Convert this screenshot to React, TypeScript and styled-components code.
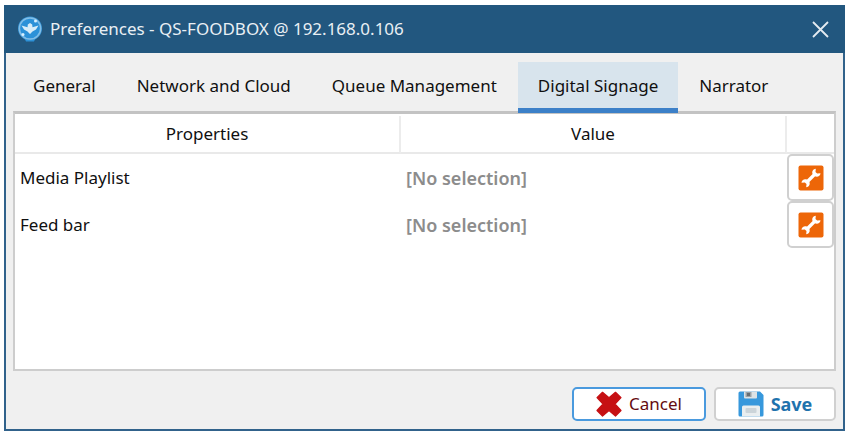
import React, { useState } from "react";
import styled, { createGlobalStyle } from "styled-components";

const Global = createGlobalStyle`
  *, *::before, *::after { box-sizing: border-box; }
  body {
    margin: 0;
    background: #ffffff;
    color: #101010;
    font-family: "Noto Sans", "Open Sans", sans-serif;
    font-size: 17px;
    line-height: 24px;
  }
  button { font: inherit; color: inherit; cursor: pointer; }
`;

const Page = styled.div`
  display: flex;
  min-height: 100vh;
  padding: 5px 6px 4px 4px;
`;

const Window = styled.main`
  display: flex;
  flex: 1;
  flex-direction: column;
  min-width: 0;
  border: 2px solid #31628b;
  border-top: 0;
  background: #f0f0f0;
`;

const TitleBar = styled.header`
  display: flex;
  flex: none;
  align-items: center;
  gap: 7px;
  height: 48px;
  margin: 0 -2px;
  padding: 0 14px 0 13px;
  background: #22577f;
  color: #e9eff4;
`;

const Title = styled.h1`
  flex: 1;
  margin: 0;
  font-size: 17px;
  font-weight: 400;
  white-space: nowrap;
`;

const CloseButton = styled.button`
  display: flex;
  padding: 2px;
  border: 0;
  background: none;
`;

const Tabs = styled.div`
  display: flex;
  flex: none;
  gap: 1px;
  margin-top: 9px;
  padding: 0 7px;
`;

const Tab = styled.button<{ $active: boolean }>`
  height: 51px;
  margin-bottom: -2px;
  padding: 2px 20px 0;
  border: 0;
  border-bottom: 5px solid ${(p) => (p.$active ? "#3c80c8" : "transparent")};
  background: ${(p) => (p.$active ? "#d8e4ed" : "transparent")};
  white-space: nowrap;
  z-index: 1;
`;

const Panel = styled.section`
  flex: 1;
  margin: 0 7px;
  padding-top: 2px;
  border: 2px solid #cdcdcd;
  border-top: 3px solid #c3c3c3;
  background: #ffffff;
`;

const Table = styled.table`
  width: 100%;
  table-layout: fixed;
  border-collapse: separate;
  border-spacing: 0;
`;

const HeadCell = styled.th<{ $width?: string }>`
  width: ${(p) => p.$width ?? "auto"};
  height: 38px;
  padding: 0;
  border-right: 2px solid #ececec;
  border-bottom: 2px solid #e9e9e9;
  font-weight: 400;
  &:last-child { border-right: 0; }
`;

const Cell = styled.td<{ $muted?: boolean }>`
  height: 47px;
  padding: 0 5px;
  color: ${(p) => (p.$muted ? "#8c8c8c" : "inherit")};
  font-size: ${(p) => (p.$muted ? "18px" : "17px")};
  font-weight: ${(p) => (p.$muted ? 600 : 400)};
`;

const ActionCell = styled.td`
  padding: 0;
`;

const ToolButton = styled.button`
  display: flex;
  align-items: center;
  justify-content: center;
  width: 100%;
  height: 47px;
  padding: 0;
  border: 2px solid #d0d0d0;
  border-radius: 5px;
  background: #ffffff;
`;

const Footer = styled.footer`
  display: flex;
  flex: none;
  justify-content: flex-end;
  gap: 8px;
  padding: 16px 7px 8px;
`;

const FooterButton = styled.button<{ $primary?: boolean }>`
  display: flex;
  align-items: center;
  justify-content: center;
  gap: 7px;
  width: ${(p) => (p.$primary ? "122px" : "134px")};
  height: 34px;
  padding: 0;
  border: 2px solid ${(p) => (p.$primary ? "#d0d0d0" : "#4a9ade")};
  border-radius: 5px;
  background: #ffffff;
  color: ${(p) => (p.$primary ? "#1f73ad" : "#650b10")};
  font-size: ${(p) => (p.$primary ? "18px" : "17px")};
  font-weight: ${(p) => (p.$primary ? 700 : 400)};
`;

const AppIcon = () => (
  <svg width="26" height="26" viewBox="0 0 26 26" aria-hidden="true">
    <path d="M7 21h12l-2 4.500H9z" fill="#2c91d8" />
    <circle cx="13" cy="12.500" r="12" fill="#3b98d8" />
    <circle cx="13" cy="12.500" r="10.600" fill="#2c91d8" stroke="#83bee7" strokeWidth="1.500" />
    <path d="M4.500 9.500 10.500 11.200 10.800 8.500 13 7 15.200 8.500 15.500 11.200 21.500 9.500 19 13.500 15.500 15.500 13 18 10.500 15.500 7 13.500z" fill="#d8ecf8" />
    <circle cx="18.500" cy="5" r="1.500" fill="#d8f0ff" />
    <circle cx="6" cy="18.500" r="1.500" fill="#d8f0ff" />
  </svg>
);

const CloseIcon = () => (
  <svg width="17" height="17" viewBox="0 0 17 17" aria-hidden="true">
    <path d="m1 1 15 15m0-15-15 15" stroke="#e4ebf1" strokeWidth="1.800" />
  </svg>
);

const WrenchIcon = () => (
  <svg width="26" height="26" viewBox="0 0 26 26" aria-hidden="true">
    <rect x=".5" y=".5" width="25" height="25" rx="2" fill="#ed6608" />
    <path d="M9.500 16.500 16.500 9.500" stroke="#fff" strokeWidth="3.200" />
    <path d="M17.800 3.800 17.500 7 19.200 8.600 22.500 8.200C22.300 11 19.500 12.400 16.800 11.200L14.600 9C13.600 6.200 15.200 4 17.800 3.800zM8.200 22.200 8.500 19 6.800 17.400 3.500 17.800C3.700 15 6.500 13.600 9.200 14.800L11.400 17C12.400 19.800 10.800 22 8.200 22.200z" fill="#fff" />
  </svg>
);

const CancelIcon = () => (
  <svg width="26" height="26" viewBox="0 0 26 26" aria-hidden="true">
    <path d="M6.500 1.300 13 6.800 19.500 1.300 25 6.600 19 13 25 19.500 19.500 25 13 19.500 6.500 25 1 19.500 7 13 1 6.600z" fill="#c61013" stroke="#c61013" strokeWidth="1.200" strokeLinejoin="round" />
  </svg>
);

const SaveIcon = () => (
  <svg width="26" height="26" viewBox="0 0 26 26" aria-hidden="true">
    <path d="M2 .5h20l3.500 3.500v20a1.500 1.500 0 0 1-1.500 1.500H2A1.500 1.500 0 0 1 .5 24V2A1.500 1.500 0 0 1 2 .5z" fill="#3798dc" />
    <path d="M6 .5h13v6q0 1-1 1H7q-1 0-1-1z" fill="#dce2e5" />
    <path d="M7.500 1h6v5h-6z" fill="#9ba2a6" />
    <path d="M9 2h3v3H9z" fill="#666e74" />
    <path d="M4 16q0-1.500 1.500-1.500h15Q22 14.500 22 16v9.500H4z" fill="#e9eef0" />
    <rect x="7.500" y="17" width="11" height="5" rx="1" fill="#cbd4d9" />
  </svg>
);

const tabNames = ["General", "Network and Cloud", "Queue Management", "Digital Signage", "Narrator"];
const properties = ["Media Playlist", "Feed bar"];

export default function App() {
  const [active, setActive] = useState("Digital Signage");

  return (
    <>
      <Global />
      <Page>
        <Window>
          <TitleBar>
            <AppIcon />
            <Title>Preferences - QS-FOODBOX @ 192.168.0.106</Title>
            <CloseButton type="button" aria-label="Close">
              <CloseIcon />
            </CloseButton>
          </TitleBar>
          <Tabs role="tablist" aria-label="Preferences">
            {tabNames.map((name) => (
              <Tab
                key={name}
                type="button"
                role="tab"
                aria-selected={name === active}
                $active={name === active}
                onClick={() => setActive(name)}
              >
                {name}
              </Tab>
            ))}
          </Tabs>
          <Panel role="tabpanel" aria-label={active}>
            <Table>
              <thead>
                <tr>
                  <HeadCell scope="col">Properties</HeadCell>
                  <HeadCell scope="col">Value</HeadCell>
                  <HeadCell $width="47px" aria-label="Actions" />
                </tr>
              </thead>
              <tbody>
                {properties.map((name) => (
                  <tr key={name}>
                    <Cell>{name}</Cell>
                    <Cell $muted>[No selection]</Cell>
                    <ActionCell>
                      <ToolButton type="button" aria-label={`Configure ${name}`}>
                        <WrenchIcon />
                      </ToolButton>
                    </ActionCell>
                  </tr>
                ))}
              </tbody>
            </Table>
          </Panel>
          <Footer>
            <FooterButton type="button">
              <CancelIcon />
              Cancel
            </FooterButton>
            <FooterButton type="button" $primary>
              <SaveIcon />
              Save
            </FooterButton>
          </Footer>
        </Window>
      </Page>
    </>
  );
}
